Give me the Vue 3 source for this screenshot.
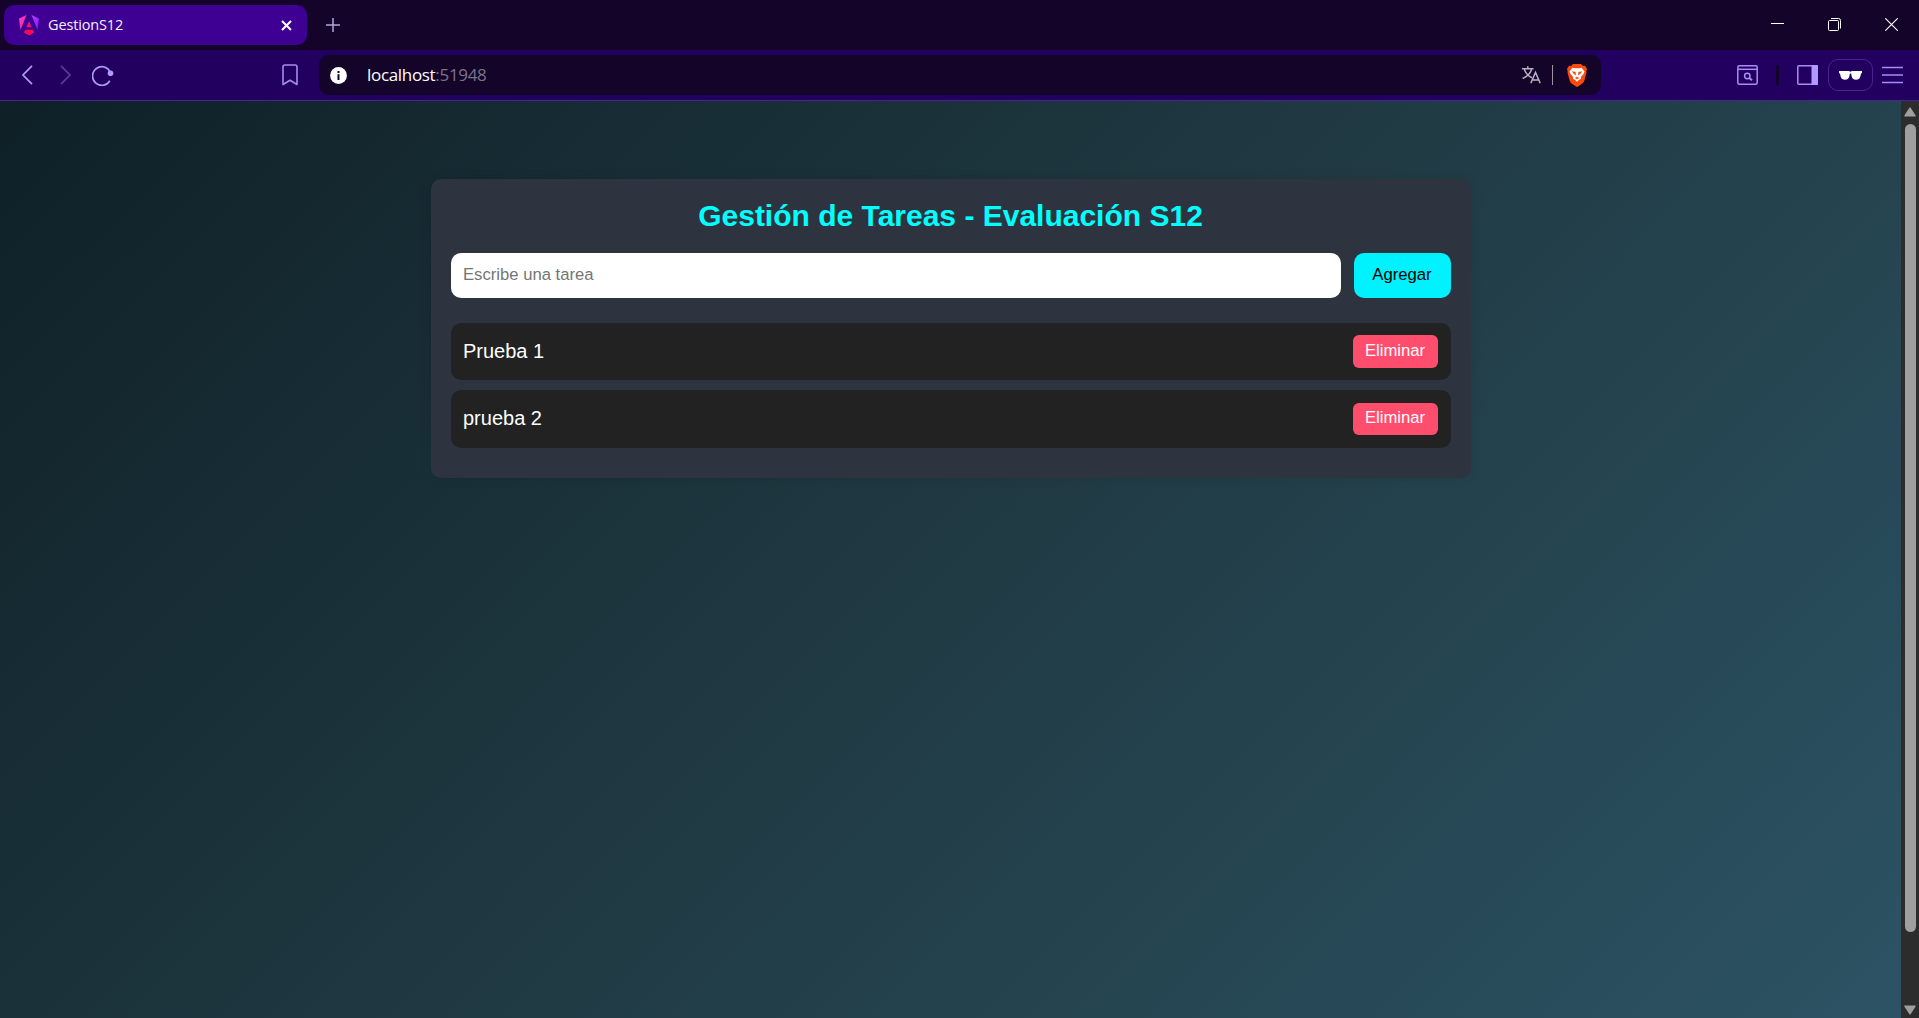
<script setup>
import { ref } from 'vue'

const tasks = ref(['Prueba 1', 'prueba 2'])
const draft = ref('')

function addTask() {
  const text = draft.value.trim()
  if (text) tasks.value.push(text)
  draft.value = ''
}

function removeTask(index) {
  tasks.value.splice(index, 1)
}
</script>

<template>
  <div class="window">
    <header class="tabstrip">
      <div class="tab">
        <svg class="favicon" width="20" height="21" viewBox="0 0 20 21">
          <defs>
            <linearGradient id="ngLeft" x1="0" y1="0" x2="1" y2="1">
              <stop offset="0" stop-color="#ff41c8" />
              <stop offset="1" stop-color="#f0189a" />
            </linearGradient>
            <linearGradient id="ngRight" x1="0" y1="0" x2="1" y2="1">
              <stop offset="0" stop-color="#c040ff" />
              <stop offset="1" stop-color="#7a14f0" />
            </linearGradient>
            <linearGradient id="ngMid" x1="0" y1="0" x2="0" y2="1">
              <stop offset="0" stop-color="#e81cc0" />
              <stop offset="1" stop-color="#ff0a50" />
            </linearGradient>
          </defs>
          <path d="M0 3.400 7.500 0 1.500 15Z" fill="url(#ngLeft)" />
          <path d="M12.500 0 20 3.400 18.500 15Z" fill="url(#ngRight)" />
          <path d="M10 6.200 12.600 12.300H7.400Z" fill="url(#ngMid)" />
          <path d="M6.300 14.800h7.400l1.300 2.800-5 3-5-3Z" fill="#ff0a50" />
        </svg>
        <span class="tab-title">GestionS12</span>
        <svg class="tab-close" width="11" height="11" viewBox="0 0 11 11">
          <path d="M1 1 10 10M10 1 1 10" stroke="#fff" stroke-width="2" />
        </svg>
      </div>
      <svg class="new-tab" width="14" height="14" viewBox="0 0 14 14">
        <path d="M7 0v14M0 7h14" stroke="#b3a2db" stroke-width="1.5" />
      </svg>
      <div class="controls">
        <svg width="13" height="13" viewBox="0 0 13 13">
          <path d="M0 5.500h13" stroke="#fff" />
        </svg>
        <svg width="13" height="13" viewBox="0 0 13 13" fill="none" stroke="#fff">
          <rect x=".5" y="2.500" width="10" height="10" rx="1" />
          <path d="M3 .5h7.500a2 2 0 0 1 2 2V10.500" />
        </svg>
        <svg width="13" height="13" viewBox="0 0 13 13">
          <path d="M.3.3 12.700 12.700M12.700.3.3 12.700" stroke="#fff" stroke-width="1.1" />
        </svg>
      </div>
    </header>

    <nav class="toolbar">
      <svg class="back" width="11" height="20" viewBox="0 0 11 20" fill="none" stroke="#b298ff" stroke-width="1.7">
        <path d="M10 .8 1 10l9 9.200" />
      </svg>
      <svg class="forward" width="11" height="20" viewBox="0 0 11 20" fill="none" stroke="#5c3a9c" stroke-width="1.7">
        <path d="M1 .8 10 10l-9 9.200" />
      </svg>
      <svg class="reload" width="22" height="21" viewBox="0 0 22 21">
        <path d="M18.300 7.200A9.300 9.300 0 1 0 17.800 15.800" fill="none" stroke="#b298ff" stroke-width="1.7" />
        <circle cx="18.500" cy="8.300" r="2.800" fill="#b298ff" />
      </svg>
      <svg class="bookmark" width="16" height="22" viewBox="0 0 16 22">
        <path d="M1 3a2 2 0 0 1 2-2h10a2 2 0 0 1 2 2v17.500L8 16.300 1 20.500Z" fill="none" stroke="#a68af0" stroke-width="1.6" stroke-linejoin="round" />
      </svg>

      <div class="address">
        <svg class="info" width="17" height="17" viewBox="0 0 17 17">
          <circle cx="8.500" cy="8.500" r="8.400" fill="#fff" />
          <path d="M7.500 4h2v2h-2zM7.500 7.300h2V13h-2z" fill="#140429" />
        </svg>
        <span class="url">localhost<span class="port">:51948</span></span>
        <svg class="translate" width="19" height="18" viewBox="0 0 19 18" fill="none" stroke="#b8b1c2" stroke-width="1.5">
          <path d="M0 2.700h11.500M5.800.3v2.400M2.400 3.500C4 8 7.200 10.500 10 11.800M9.700 2.700C8.700 7.500 4.800 10.700.7 12.500" />
          <path d="M8.800 17.300 13.500 6.500l4.700 10.800M10.300 14h6.400" />
        </svg>
        <i class="divider"></i>
        <svg class="shield" width="20" height="23" viewBox="0 0 20 23">
          <path d="M6 0h8l2 2 2-.2L20 5l-.7 2.200.2 1.300-2.200 8.200Q16.700 18.500 15 19.700L11 22.400q-1 .8-2 0L5 19.700Q3.300 18.500 2.700 16.700L.5 8.500l.2-1.300L0 5l2-3.200L4 2Z" fill="#fb4a0b" />
          <path d="M5.500 3.700 8 4.200h4l2.500-.5L17.500 7.500 16.500 10l-2.700 3 .3 1.500-2.600 1.700L10 17.700 8.500 16.200 5.900 14.500 6.200 13 3.500 10 2.500 7.500Z" fill="#fff" />
          <path d="M4.800 7.300 8.500 8 9 11.500 6.800 10ZM15.200 7.300 11.500 8 11 11.500 13.200 10ZM7.800 14 10 12.800 12.200 14 10 15.300Z" fill="#fb4a0b" />
        </svg>
      </div>

      <div class="actions">
        <svg class="page-search" width="21" height="20" viewBox="0 0 21 20" fill="none" stroke="#a88cf5" stroke-width="1.5">
          <rect x=".8" y=".8" width="19.400" height="18.400" rx="1.500" />
          <path d="M1 4.300h19" />
          <circle cx="10.300" cy="11" r="2.700" />
          <path d="M12.300 13 15 15.300" stroke-width="2" />
        </svg>
        <i class="mark"></i>
        <svg class="sidebar" width="21" height="20" viewBox="0 0 21 20">
          <rect x=".8" y=".8" width="19.400" height="18.400" rx="1" fill="none" stroke="#a88cf5" stroke-width="1.5" />
          <path d="M14.500 0H20a1 1 0 0 1 1 1v18a1 1 0 0 1-1 1h-5.500Z" fill="#b298ff" />
        </svg>
        <div class="private">
          <svg width="23" height="9" viewBox="0 0 23 9" fill="#fff">
            <path d="M0 0h10l1.500.7L13 0h10v2l-1 .7-.8 3.300Q20.300 8.700 17 8.700T12.700 5.500l-.5-2.800q-.7-.5-1.400 0l-.5 2.800Q9.300 8.700 6 8.700T1.800 6L1 2.700 0 2Z" />
          </svg>
        </div>
        <svg class="menu" width="21" height="18" viewBox="0 0 21 18">
          <path d="M0 1.500h21M0 9h21M0 16.500h21" stroke="#a88cf5" stroke-width="1.7" />
        </svg>
      </div>
    </nav>

    <div class="viewport">
      <main class="page">
        <section class="card">
          <h2>Gestión de Tareas - Evaluación S12</h2>
          <form class="entry" @submit.prevent="addTask">
            <input v-model="draft" type="text" placeholder="Escribe una tarea" />
            <button class="add">Agregar</button>
          </form>
          <ul>
            <li v-for="(task, i) in tasks" :key="i">
              <span>{{ task }}</span>
              <button class="remove" @click="removeTask(i)">Eliminar</button>
            </li>
          </ul>
        </section>
      </main>
      <div class="scrollbar">
        <svg width="12" height="10" viewBox="0 0 12 10">
          <path d="M6 1.200 11 8.800H1Z" fill="#9f9f9f" stroke="#9f9f9f" stroke-width="1.500" stroke-linejoin="round" />
        </svg>
        <i class="thumb"></i>
        <svg class="down" width="12" height="10" viewBox="0 0 12 10">
          <path d="M1 1.200h10L6 8.800Z" fill="#9f9f9f" stroke="#9f9f9f" stroke-width="1.500" stroke-linejoin="round" />
        </svg>
      </div>
    </div>
  </div>
</template>

<style>
body {
  overflow: hidden;
  background: #140429;
}
</style>

<style scoped>
* {
  box-sizing: border-box;
}
svg {
  display: block;
  flex: none;
}
.window {
  display: flex;
  flex-direction: column;
  height: 1018px;
  overflow: hidden;
  font-family: "Liberation Sans", Arial, sans-serif;
}
.tabstrip {
  display: flex;
  align-items: center;
  flex: none;
  height: 50px;
  padding: 0 17px 0 4px;
  background: #140429;
}
.tab {
  display: flex;
  align-items: center;
  width: 303px;
  height: 40px;
  padding: 0 15px;
  border-radius: 10px;
  background: #3d0092;
}
.tab-title {
  margin-left: 9px;
  font: 14.500px/20px "Open Sans", "Noto Sans", sans-serif;
  letter-spacing: -0.15px;
  color: #f4efff;
}
.tab-close {
  margin-left: auto;
}
.new-tab {
  margin-left: 19px;
}
.controls {
  display: flex;
  gap: 44px;
  margin-left: auto;
  margin-right: 4px;
  padding-bottom: 1px;
}
.toolbar {
  display: flex;
  align-items: center;
  flex: none;
  height: 51px;
  padding: 0 16px 0 22px;
  border-bottom: 1px solid #4a2391;
  background: #22005f;
}
.forward {
  margin-left: 27px;
}
.reload {
  margin-left: 21px;
}
.bookmark {
  margin-left: 168px;
}
.address {
  display: flex;
  align-items: center;
  width: 1282px;
  height: 40px;
  margin-left: 21px;
  padding: 0 14px 0 11px;
  border-radius: 10px;
  background: #140429;
}
.info {
  margin-top: 1px;
}
.url {
  margin-left: 20px;
  margin-right: auto;
  font: 17px/24px "Open Sans", "Noto Sans", sans-serif;
  letter-spacing: -0.32px;
  color: #fff;
}
.port {
  color: #7b7388;
}
.divider {
  width: 1px;
  height: 20px;
  margin: 0 14px 0 11px;
  background: #9b95a6;
}
.actions {
  display: flex;
  align-items: center;
  margin-left: auto;
}
.mark {
  width: 3px;
  height: 20px;
  margin: 0 18px;
  border-radius: 2px;
  background: #140429;
}
.private {
  display: grid;
  place-items: center;
  width: 45px;
  height: 32px;
  margin: 0 9px 0 10px;
  border: 1px solid #4a2391;
  border-radius: 10px;
}
.viewport {
  display: flex;
  flex: 1;
  min-height: 0;
}
.page {
  flex: 1;
  padding-top: 78px;
  background: linear-gradient(135deg, #0f2027, #203a43, #2c5364);
}
.card {
  width: 1040px;
  height: 299px;
  margin: 0 auto;
  padding: 20px;
  border-radius: 10px;
  background: #2d3440;
  box-shadow: 0 0 12px rgba(0, 0, 0, 0.1);
}
h2 {
  margin: 0 0 20px;
  font-size: 30px;
  line-height: 34px;
  text-align: center;
  color: #0ff;
}
.entry {
  display: flex;
  gap: 13px;
  height: 45px;
}
input,
button {
  border: 0;
  font: 16.667px "Liberation Sans", Arial, sans-serif;
}
input {
  flex: 1;
  min-width: 0;
  padding: 0 12.500px 2px;
  border-radius: 10px;
  background: #fff;
}
input::placeholder {
  color: #757575;
}
.add {
  width: 97px;
  padding: 0 0 1px;
  border-radius: 10px;
  background: #00f2ff;
  color: #000;
}
ul {
  display: flex;
  flex-direction: column;
  gap: 10px;
  margin: 24.600px 0 0;
  padding: 0;
  list-style: none;
}
li {
  display: flex;
  align-items: center;
  justify-content: space-between;
  height: 57.500px;
  padding: 0 13px 0 12.500px;
  border-radius: 10px;
  background: #222;
  font-size: 20px;
  color: #fff;
}
li span {
  padding-bottom: 0.400px;
}
.remove {
  width: 85px;
  height: 32.500px;
  padding: 0 0 1px;
  border-radius: 6px;
  background: #ff4d6d;
  color: #fff;
}
.scrollbar {
  display: flex;
  flex-direction: column;
  align-items: center;
  width: 18px;
  padding: 6px 0 3px;
  background: #2c2c2c;
}
.thumb {
  width: 11px;
  height: 808px;
  margin-top: 7px;
  border-radius: 6px;
  background: #9f9f9f;
}
.down {
  margin-top: auto;
}
</style>
